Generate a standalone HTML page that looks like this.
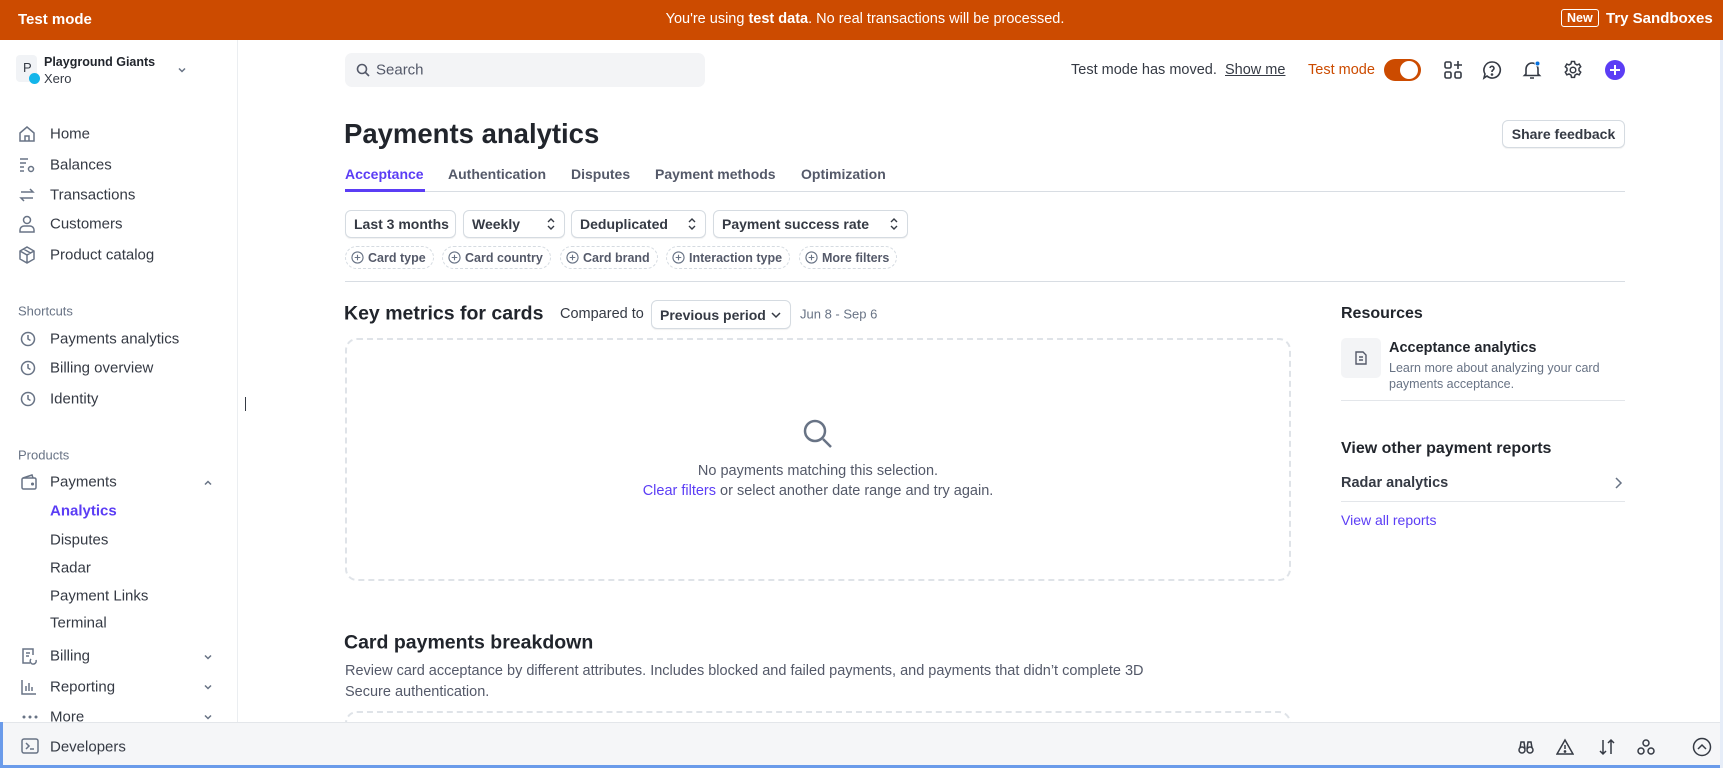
<!DOCTYPE html>
<html><head><meta charset="utf-8"><style>
*{box-sizing:border-box;margin:0;padding:0}
body{width:1723px;height:768px;overflow:hidden;background:#fff;font-family:"Liberation Sans",sans-serif;color:#353a44;position:relative;font-size:15px}
.a{position:absolute;white-space:nowrap}
.banner{left:0;top:0;width:1723px;height:40px;background:#cc4b00;color:#fff}
.side{left:0;top:40px;width:238px;height:682px;border-right:1px solid #ebeef1;background:#fff}
.nav{left:50px;font-size:15px;color:#353a44;transform:translateY(-50%)}
.lbl{left:18px;font-size:13px;color:#687385;transform:translateY(-50%)}
.btn{border:1px solid #d5dbe1;border-radius:6px;background:#fff;box-shadow:0 1px 1px rgba(0,0,0,.06);font-size:14px;font-weight:bold;color:#353a44;display:flex;align-items:center;padding:0 8px;justify-content:space-between}
.pill{border:1px dashed #d5dbe1;border-radius:12px;font-size:12.5px;color:#545969;display:flex;align-items:center;padding:0 7px 0 5px;height:23px;top:246px;font-weight:bold}
.pill svg{margin-right:4px}
.tab{top:174px;font-size:14px;color:#545969;transform:translateY(-50%);font-weight:bold}
.h2{font-size:19.5px;font-weight:bold;color:#21252c;transform:translateY(-50%)}
.mid{transform:translateY(-50%)}
</style></head><body>
<div class="a banner">
 <div class="a" style="left:18px;top:11px;font-weight:bold;font-size:15px">Test mode</div>
 <div class="a" style="left:865px;top:11px;transform:translateX(-50%);font-size:14.5px">You're using <b>test data</b>. No real transactions will be processed.</div>
 <div class="a" style="left:1561px;top:9px;border:1px solid #fff;border-radius:3px;padding:1px 5px;font-size:12.5px;font-weight:bold">New</div>
 <div class="a" style="left:1606px;top:10px;font-size:15px;font-weight:bold">Try Sandboxes</div>
</div>
<div class="a" style="left:0;top:40px;width:3px;height:728px;background:#6a9bea"></div>
<div class="a" style="left:0;top:765px;width:1723px;height:3px;background:#6a9bea"></div>
<div class="a" style="left:1720px;top:40px;width:3px;height:728px;background:#e6edf8"></div>
<div class="a side"></div>
<!-- account -->
<div class="a" style="left:16px;top:55px;width:21px;height:27px;background:#f1f3f6;border-radius:4px;font-size:13px;padding:5px 0 0 7px;color:#353a44">P</div>
<div class="a" style="left:29px;top:73px;width:11px;height:11px;border-radius:50%;background:#13b5ea"></div>
<div class="a" style="left:44px;top:55px;font-size:12.5px;font-weight:bold;color:#21252c">Playground Giants</div>
<div class="a" style="left:44px;top:71px;font-size:13px;color:#353a44">Xero</div>
<svg class="a" style="left:176px;top:64px" width="12" height="12" viewBox="0 0 12 12"><path d="M3 4.5l3 3 3-3" stroke="#687385" stroke-width="1.5" fill="none"/></svg>
<!-- nav icons -->
<svg class="a" style="left:18px;top:125px" width="18" height="18" viewBox="0 0 18 18" fill="none" stroke="#687385" stroke-width="1.5"><path d="M2 8l7-6 7 6v8H2z M7 16v-5h4v5"/></svg>
<svg class="a" style="left:18px;top:156px" width="18" height="18" viewBox="0 0 18 18" fill="none" stroke="#687385" stroke-width="1.5"><path d="M2 3h8M2 7h6M2 11h4M2 15h4"/><circle cx="13" cy="13" r="2.5"/></svg>
<svg class="a" style="left:18px;top:186px" width="18" height="18" viewBox="0 0 18 18" fill="none" stroke="#687385" stroke-width="1.5"><path d="M3 6h12l-3-3M15 12H3l3 3"/></svg>
<svg class="a" style="left:18px;top:215px" width="18" height="18" viewBox="0 0 18 18" fill="none" stroke="#687385" stroke-width="1.5"><circle cx="9" cy="5" r="3.5"/><path d="M2 17v-2a4 4 0 014-4h6a4 4 0 014 4v2z"/></svg>
<svg class="a" style="left:18px;top:246px" width="18" height="18" viewBox="0 0 18 18" fill="none" stroke="#687385" stroke-width="1.5"><path d="M9 1l7 4v8l-7 4-7-4V5zM2 5l7 4 7-4M9 9v8M5.5 3l7 4"/></svg>
<div class="a nav" style="top:134px">Home</div>
<div class="a nav" style="top:165px">Balances</div>
<div class="a nav" style="top:195px">Transactions</div>
<div class="a nav" style="top:224px">Customers</div>
<div class="a nav" style="top:255px">Product catalog</div>
<div class="a lbl" style="top:311px">Shortcuts</div>
<svg class="a" style="left:20px;top:331px" width="16" height="16" viewBox="0 0 16 16" fill="none" stroke="#687385" stroke-width="1.5"><circle cx="8" cy="8" r="6.5"/><path d="M8 4v4l2.5 1.5"/></svg>
<svg class="a" style="left:20px;top:360px" width="16" height="16" viewBox="0 0 16 16" fill="none" stroke="#687385" stroke-width="1.5"><circle cx="8" cy="8" r="6.5"/><path d="M8 4v4l2.5 1.5"/></svg>
<svg class="a" style="left:20px;top:391px" width="16" height="16" viewBox="0 0 16 16" fill="none" stroke="#687385" stroke-width="1.5"><circle cx="8" cy="8" r="6.5"/><path d="M8 4v4l2.5 1.5"/></svg>
<div class="a nav" style="top:339px">Payments analytics</div>
<div class="a nav" style="top:368px">Billing overview</div>
<div class="a nav" style="top:399px">Identity</div>
<div class="a" style="left:245px;top:397px;width:1px;height:14px;background:#353a44"></div>
<div class="a lbl" style="top:455px">Products</div>
<svg class="a" style="left:20px;top:473px" width="18" height="18" viewBox="0 0 18 18" fill="none" stroke="#687385" stroke-width="1.5"><rect x="2" y="5" width="14" height="11" rx="1.5"/><path d="M3 5l9-3 1 3"/><circle cx="12.5" cy="11" r=".8" fill="#687385"/></svg>
<div class="a nav" style="top:482px">Payments</div>
<svg class="a" style="left:202px;top:477px" width="12" height="12" viewBox="0 0 12 12"><path d="M3 7.5l3-3 3 3" stroke="#687385" stroke-width="1.5" fill="none"/></svg>
<div class="a nav" style="top:511px;color:#5b3df5;font-weight:bold">Analytics</div>
<div class="a nav" style="top:540px">Disputes</div>
<div class="a nav" style="top:568px">Radar</div>
<div class="a nav" style="top:596px">Payment Links</div>
<div class="a nav" style="top:623px">Terminal</div>
<svg class="a" style="left:20px;top:647px" width="18" height="18" viewBox="0 0 18 18" fill="none" stroke="#687385" stroke-width="1.5"><path d="M10 16H3V2h10v6M6 6h4M6 9h3"/><path d="M11 12a3 3 0 105 1"/></svg>
<div class="a nav" style="top:656px">Billing</div>
<svg class="a" style="left:202px;top:651px" width="12" height="12" viewBox="0 0 12 12"><path d="M3 4.5l3 3 3-3" stroke="#687385" stroke-width="1.5" fill="none"/></svg>
<svg class="a" style="left:20px;top:678px" width="18" height="18" viewBox="0 0 18 18" fill="none" stroke="#687385" stroke-width="1.5"><path d="M2 2v14h14M6 13V8M9 13V5M12 13V9"/></svg>
<div class="a nav" style="top:687px">Reporting</div>
<svg class="a" style="left:202px;top:681px" width="12" height="12" viewBox="0 0 12 12"><path d="M3 4.5l3 3 3-3" stroke="#687385" stroke-width="1.5" fill="none"/></svg>
<svg class="a" style="left:21px;top:714px" width="18" height="6" viewBox="0 0 18 6"><circle cx="3" cy="3" r="1.5" fill="#687385"/><circle cx="9" cy="3" r="1.5" fill="#687385"/><circle cx="15" cy="3" r="1.5" fill="#687385"/></svg>
<div class="a nav" style="top:717px">More</div>
<svg class="a" style="left:202px;top:711px" width="12" height="12" viewBox="0 0 12 12"><path d="M3 4.5l3 3 3-3" stroke="#687385" stroke-width="1.5" fill="none"/></svg>
<!-- top bar -->
<div class="a" style="left:345px;top:53px;width:360px;height:34px;background:#f3f4f6;border-radius:7px"></div>
<svg class="a" style="left:356px;top:63px" width="14" height="14" viewBox="0 0 14 14" fill="none" stroke="#545969" stroke-width="1.6"><circle cx="6" cy="6" r="4.5"/><path d="M9.5 9.5L13 13"/></svg>
<div class="a mid" style="left:376px;top:70px;color:#545969">Search</div>
<div class="a mid" style="left:1071px;top:70px;font-size:14.5px">Test mode has moved.</div>
<div class="a mid" style="left:1225px;top:70px;font-size:14.5px;text-decoration:underline">Show me</div>
<div class="a mid" style="left:1308px;top:70px;font-size:14.5px;color:#cc4b00">Test mode</div>
<div class="a" style="left:1384px;top:59px;width:37px;height:22px;border-radius:11px;background:#cc4b00"></div>
<div class="a" style="left:1400px;top:61px;width:18px;height:18px;border-radius:50%;background:#fff"></div>
<svg class="a" style="left:1443px;top:60px" width="20" height="20" viewBox="0 0 20 20" fill="none" stroke="#353a44" stroke-width="1.6"><rect x="2" y="2" width="6" height="6" rx="1.5"/><rect x="2" y="12" width="6" height="6" rx="1.5"/><rect x="12" y="12" width="6" height="6" rx="1.5"/><path d="M15 1v8M11 5h8"/></svg>
<svg class="a" style="left:1482px;top:60px" width="20" height="20" viewBox="0 0 20 20" fill="none" stroke="#353a44" stroke-width="1.6"><path d="M10 2a8 8 0 11-5 14l-3 2 1-4A8 8 0 0110 2z"/><path d="M8 8a2 2 0 113 2c-1 .5-1 1-1 2"/><circle cx="10" cy="14.5" r=".5" fill="#353a44"/></svg>
<svg class="a" style="left:1522px;top:60px" width="20" height="20" viewBox="0 0 20 20" fill="none" stroke="#353a44" stroke-width="1.6"><path d="M4 14V9a6 6 0 0112 0v5l1.5 1.5h-15zM8 18h4"/><circle cx="15.5" cy="3.5" r="2.5" fill="#0570de" stroke="#fff" stroke-width="1"/></svg>
<svg class="a" style="left:1563px;top:60px" width="20" height="20" viewBox="0 0 20 20" fill="none" stroke="#353a44" stroke-width="1.5"><circle cx="10" cy="10" r="2.8"/><path d="M8.5 1.5h3l.5 2.3 2 1.1 2.2-.8 1.5 2.6-1.7 1.6v2.3l1.7 1.6-1.5 2.6-2.2-.8-2 1.1-.5 2.3h-3l-.5-2.3-2-1.1-2.2.8-1.5-2.6 1.7-1.6V8.3L2.3 6.7l1.5-2.6 2.2.8 2-1.1z"/></svg>
<div class="a" style="left:1605px;top:60px;width:20px;height:20px;border-radius:50%;background:#5b3df5"></div>
<svg class="a" style="left:1605px;top:60px" width="20" height="20" viewBox="0 0 20 20" stroke="#fff" stroke-width="2"><path d="M10 5v10M5 10h10"/></svg>
<!-- title -->
<div class="a mid" style="left:344px;top:134px;font-size:27.5px;font-weight:bold;color:#21252c">Payments analytics</div>
<div class="a btn" style="left:1502px;top:120px;width:123px;height:28px;font-size:14px;justify-content:center">Share feedback</div>
<div class="a tab" style="left:345px;color:#5b3df5">Acceptance</div>
<div class="a tab" style="left:448px">Authentication</div>
<div class="a tab" style="left:571px">Disputes</div>
<div class="a tab" style="left:655px">Payment methods</div>
<div class="a tab" style="left:801px">Optimization</div>
<div class="a" style="left:345px;top:191px;width:1280px;height:1px;background:#d8dde3"></div>
<div class="a" style="left:345px;top:189px;width:80px;height:3px;background:#5b3df5"></div>
<!-- filters -->
<div class="a btn" style="left:345px;top:210px;width:111px;height:28px">Last 3 months</div>
<div class="a btn" style="left:463px;top:210px;width:102px;height:28px">Weekly <svg width="10" height="14" viewBox="0 0 10 14"><path d="M2 5l3-3 3 3M2 9l3 3 3-3" stroke="#353a44" stroke-width="1.4" fill="none"/></svg></div>
<div class="a btn" style="left:571px;top:210px;width:135px;height:28px">Deduplicated <svg width="10" height="14" viewBox="0 0 10 14"><path d="M2 5l3-3 3 3M2 9l3 3 3-3" stroke="#353a44" stroke-width="1.4" fill="none"/></svg></div>
<div class="a btn" style="left:713px;top:210px;width:195px;height:28px">Payment success rate <svg width="10" height="14" viewBox="0 0 10 14"><path d="M2 5l3-3 3 3M2 9l3 3 3-3" stroke="#353a44" stroke-width="1.4" fill="none"/></svg></div>
<svg width="0" height="0" style="position:absolute"><defs><symbol id="pl" viewBox="0 0 14 14"><circle cx="7" cy="7" r="6" fill="none" stroke="#687385" stroke-width="1.2"/><path d="M7 4v6M4 7h6" stroke="#687385" stroke-width="1.2"/></symbol></defs></svg>
<div class="a pill" style="left:345px"><svg width="13" height="13"><use href="#pl"/></svg>Card type</div>
<div class="a pill" style="left:442px"><svg width="13" height="13"><use href="#pl"/></svg>Card country</div>
<div class="a pill" style="left:560px"><svg width="13" height="13"><use href="#pl"/></svg>Card brand</div>
<div class="a pill" style="left:666px"><svg width="13" height="13"><use href="#pl"/></svg>Interaction type</div>
<div class="a pill" style="left:799px"><svg width="13" height="13"><use href="#pl"/></svg>More filters</div>
<div class="a" style="left:345px;top:281px;width:1280px;height:1px;background:#d8dde3"></div>
<!-- key metrics -->
<div class="a h2" style="left:344px;top:314px">Key metrics for cards</div>
<div class="a mid" style="left:560px;top:314px;font-size:14.5px">Compared to</div>
<div class="a btn" style="left:651px;top:300px;width:140px;height:29px">Previous period <svg width="12" height="12" viewBox="0 0 12 12"><path d="M2 4l4 4 4-4" stroke="#353a44" stroke-width="1.5" fill="none"/></svg></div>
<div class="a mid" style="left:800px;top:314px;font-size:13px;color:#687385">Jun 8 - Sep 6</div>
<div class="a" style="left:345px;top:338px;width:946px;height:243px;border:2px dashed #dfe3e8;border-radius:12px"></div>
<svg class="a" style="left:802px;top:418px" width="32" height="32" viewBox="0 0 32 32" fill="none" stroke="#687385" stroke-width="2.5"><circle cx="13" cy="13" r="10"/><path d="M21 21l8 8"/></svg>
<div class="a mid" style="left:818px;top:471px;transform:translate(-50%,-50%);font-size:14.5px;color:#545969">No payments matching this selection.</div>
<div class="a mid" style="left:818px;top:491px;transform:translate(-50%,-50%);font-size:14.5px;color:#545969"><span style="color:#5b3df5">Clear filters</span> or select another date range and try again.</div>
<div class="a h2" style="left:344px;top:643px">Card payments breakdown</div>
<div class="a mid" style="left:345px;top:671px;font-size:14.5px;color:#545969">Review card acceptance by different attributes. Includes blocked and failed payments, and payments that didn’t complete 3D</div>
<div class="a mid" style="left:345px;top:692px;font-size:14.5px;color:#545969">Secure authentication.</div>
<div class="a" style="left:345px;top:711px;width:946px;height:30px;border:2px dashed #dfe3e8;border-bottom:none;border-radius:12px 12px 0 0"></div>
<!-- bottom bar -->
<div class="a" style="left:3px;top:722px;width:1717px;height:43px;background:#f5f6f8;border-top:1px solid #e3e6ea"></div>
<svg class="a" style="left:21px;top:738px" width="18" height="16" viewBox="0 0 18 16" fill="none" stroke="#687385" stroke-width="1.5"><rect x="1" y="1" width="16" height="14" rx="2"/><path d="M5 5l3 3-3 3M9 11h4"/></svg>
<div class="a nav" style="top:747px">Developers</div>
<svg class="a" style="left:1517px;top:738px" width="18" height="18" viewBox="0 0 18 18" fill="none" stroke="#353a44" stroke-width="1.5"><circle cx="5" cy="12" r="3"/><circle cx="13" cy="12" r="3"/><path d="M3 10l1-6h3l1 7M15 10l-1-6h-3l-1 7"/></svg>
<svg class="a" style="left:1556px;top:738px" width="18" height="18" viewBox="0 0 18 18" fill="none" stroke="#353a44" stroke-width="1.5"><path d="M9 2l8 14H1z M9 7v4"/><circle cx="9" cy="13.5" r=".6" fill="#353a44"/></svg>
<svg class="a" style="left:1598px;top:738px" width="18" height="18" viewBox="0 0 18 18" fill="none" stroke="#353a44" stroke-width="1.5"><path d="M5 2v14M2 13l3 3 3-3M13 16V2M10 5l3-3 3 3"/></svg>
<svg class="a" style="left:1637px;top:738px" width="18" height="18" viewBox="0 0 18 18" fill="none" stroke="#353a44" stroke-width="1.5"><circle cx="9" cy="5" r="3"/><circle cx="4" cy="13" r="3"/><circle cx="14" cy="13" r="3"/></svg>
<svg class="a" style="left:1692px;top:737px" width="20" height="20" viewBox="0 0 20 20" fill="none" stroke="#353a44" stroke-width="1.5"><circle cx="10" cy="10" r="8.5"/><path d="M6 12l4-4 4 4"/></svg>
<!-- resources -->
<div class="a mid" style="left:1341px;top:314px;font-size:16px;font-weight:bold;color:#21252c">Resources</div>
<div class="a" style="left:1341px;top:338px;width:40px;height:40px;background:#f3f4f6;border-radius:5px"></div>
<svg class="a" style="left:1353px;top:350px" width="16" height="16" viewBox="0 0 16 16" fill="none" stroke="#545969" stroke-width="1.4"><path d="M3 2h7l3 3v9H3z M6 7h4M6 10h4"/></svg>
<div class="a mid" style="left:1389px;top:348px;font-size:14.5px;font-weight:bold;color:#21252c">Acceptance analytics</div>
<div class="a mid" style="left:1389px;top:368px;font-size:12.5px;color:#687385">Learn more about analyzing your card</div>
<div class="a mid" style="left:1389px;top:384px;font-size:12.5px;color:#687385">payments acceptance.</div>
<div class="a" style="left:1341px;top:400px;width:284px;height:1px;background:#e3e6ea"></div>
<div class="a mid" style="left:1341px;top:449px;font-size:16px;font-weight:bold;color:#21252c">View other payment reports</div>
<div class="a mid" style="left:1341px;top:483px;font-size:14.5px;font-weight:bold">Radar analytics</div>
<svg class="a" style="left:1613px;top:476px" width="12" height="14" viewBox="0 0 12 14"><path d="M3 2l5 5-5 5" stroke="#687385" stroke-width="1.5" fill="none"/></svg>
<div class="a" style="left:1341px;top:501px;width:284px;height:1px;background:#e3e6ea"></div>
<div class="a mid" style="left:1341px;top:520px;font-size:14px;color:#5b3df5">View all reports</div>
</body></html>
